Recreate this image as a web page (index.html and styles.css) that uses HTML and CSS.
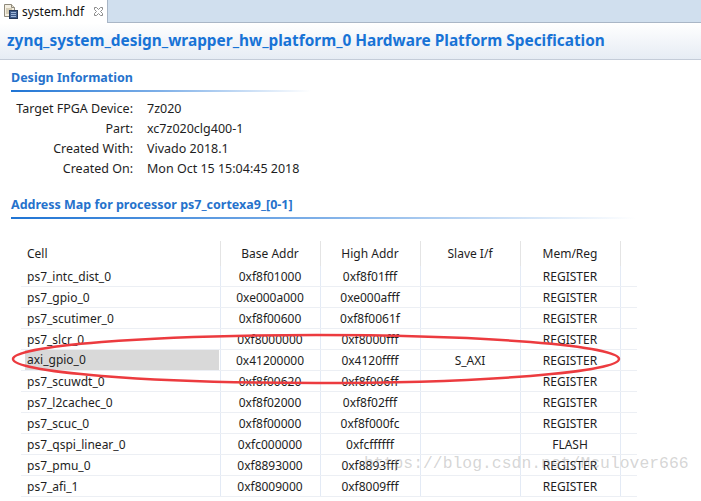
FILE: index.html
```html
<!DOCTYPE html>
<html>
<head>
<meta charset="utf-8">
<link rel="stylesheet" href="styles.css">
</head>
<body>
<div class="tabbar">
  <div class="tab">
    <svg class="file-icon" width="16" height="16" viewBox="0 0 16 16">
      <path d="M1.5 1.5h7l3 3v9h-10z" fill="#f4efe2" stroke="#8f8a7c"/>
      <path d="M8.5 1.5v3h3" fill="#e6dfcc" stroke="#8f8a7c"/>
      <path d="M3 6h6M3 8h5M3 10h4" stroke="#b9ad8c"/>
      <rect x="6.5" y="7.5" width="8" height="8" fill="#3f5c8a" stroke="#26395a"/>
      <path d="M8 9.5h5M8 11.5h5M8 13.5h5" stroke="#9fb6d8"/>
    </svg>
    <span class="tab-label">system.hdf</span>
    <svg class="close-icon" width="9" height="9" viewBox="0 0 9 9">
      <path d="M0.5 0.5h2l2 2 2-2h2v2l-2 2 2 2v2h-2l-2-2-2 2h-2v-2l2-2-2-2z" fill="#fff" stroke="#8a8a8a" stroke-width="1"/>
    </svg>
  </div>
</div>
<div class="header">
  <h1 class="title">zynq_system_design_wrapper_hw_platform_0 Hardware Platform Specification</h1>
</div>
<div class="content">
  <section class="section">
    <h2 class="section-title">Design Information</h2>
    <div class="rule rule-short"></div>
    <div class="info">
      <span class="label">Target FPGA Device:</span><span class="value">7z020</span>
      <span class="label">Part:</span><span class="value">xc7z020clg400-1</span>
      <span class="label">Created With:</span><span class="value">Vivado 2018.1</span>
      <span class="label">Created On:</span><span class="value">Mon Oct 15 15:04:45 2018</span>
    </div>
  </section>
  <section class="section section-map">
    <h2 class="section-title">Address Map for processor ps7_cortexa9_[0-1]</h2>
    <div class="rule rule-long"></div>
    <table class="map">
      <colgroup>
        <col class="c-cell"><col class="c-addr"><col class="c-addr"><col class="c-addr"><col class="c-addr"><col class="c-fill">
      </colgroup>
      <thead>
        <tr><th class="left">Cell</th><th>Base Addr</th><th>High Addr</th><th>Slave I/f</th><th>Mem/Reg</th><th class="fill"></th></tr>
      </thead>
      <tbody>
        <tr><td class="left">ps7_intc_dist_0</td><td>0xf8f01000</td><td>0xf8f01fff</td><td></td><td>REGISTER</td><td class="fill"></td></tr>
        <tr><td class="left">ps7_gpio_0</td><td>0xe000a000</td><td>0xe000afff</td><td></td><td>REGISTER</td><td class="fill"></td></tr>
        <tr><td class="left">ps7_scutimer_0</td><td>0xf8f00600</td><td>0xf8f0061f</td><td></td><td>REGISTER</td><td class="fill"></td></tr>
        <tr><td class="left">ps7_slcr_0</td><td>0xf8000000</td><td>0xf8000fff</td><td></td><td>REGISTER</td><td class="fill"></td></tr>
        <tr><td class="left"><span class="selected">axi_gpio_0</span></td><td>0x41200000</td><td>0x4120ffff</td><td>S_AXI</td><td>REGISTER</td><td class="fill"></td></tr>
        <tr><td class="left">ps7_scuwdt_0</td><td>0xf8f00620</td><td>0xf8f006ff</td><td></td><td>REGISTER</td><td class="fill"></td></tr>
        <tr><td class="left">ps7_l2cachec_0</td><td>0xf8f02000</td><td>0xf8f02fff</td><td></td><td>REGISTER</td><td class="fill"></td></tr>
        <tr><td class="left">ps7_scuc_0</td><td>0xf8f00000</td><td>0xf8f000fc</td><td></td><td>REGISTER</td><td class="fill"></td></tr>
        <tr><td class="left">ps7_qspi_linear_0</td><td>0xfc000000</td><td>0xfcffffff</td><td></td><td>FLASH</td><td class="fill"></td></tr>
        <tr><td class="left">ps7_pmu_0</td><td>0xf8893000</td><td>0xf8893fff</td><td></td><td>REGISTER</td><td class="fill"></td></tr>
        <tr><td class="left">ps7_afi_1</td><td>0xf8009000</td><td>0xf8009fff</td><td></td><td>REGISTER</td><td class="fill"></td></tr>
      </tbody>
    </table>
  </section>
</div>
<svg class="annotation" width="701" height="501" viewBox="0 0 701 501">
  <ellipse cx="316" cy="359" rx="303" ry="24" fill="none" stroke="#ec3b3f" stroke-width="2.5"/>
</svg>
<div class="watermark">https://blog.csdn.net/Mculover666</div>
</body>
</html>
```
FILE: styles.css
```css
html, body {
  margin: 0;
  padding: 0;
  background: #fff;
}
body {
  width: 701px;
  height: 501px;
  overflow: hidden;
  position: relative;
  font-family: "Noto Sans", "Open Sans", sans-serif;
  font-size: 12px;
  color: #1e1e1e;
}
.tabbar {
  height: 22px;
  background: #d0dfee;
  border-bottom: 1px solid #a9b6c6;
  display: flex;
  align-items: flex-end;
}
.tab {
  width: 108px;
  height: 23px;
  margin-bottom: -1px;
  background: #fff;
  border-right: 1px solid #a9b6c6;
  display: flex;
  align-items: center;
  box-sizing: border-box;
  padding-left: 3px;
}
.file-icon {
  flex: none;
  margin-top: -1px;
}
.tab-label {
  margin-left: 3px;
  font-size: 12px;
  color: #111;
  line-height: 16px;
}
.close-icon {
  margin-left: 10px;
  flex: none;
}
.header {
  height: 36px;
  background: linear-gradient(#ffffff, #e6ecf4);
  border-bottom: 1px solid #c4ccd8;
  display: flex;
  align-items: center;
  padding-left: 7px;
}
.title {
  margin: 0;
  font-size: 15.4px;
  font-weight: bold;
  color: #1873d6;
  white-space: nowrap;
  line-height: 18px;
}
.content {
  padding-left: 11px;
}
.section {
  padding-top: 10px;
}
.section-title {
  margin: 0;
  font-size: 12.5px;
  font-weight: bold;
  color: #2672cc;
  line-height: 16px;
}
.rule {
  height: 2px;
  margin-top: 4px;
  background: linear-gradient(90deg, #1f74d4 0%, #7fb0e8 50%, rgba(255,255,255,0) 100%);
}
.rule-short { width: 300px; }
.rule-long { width: 625px; }
.info {
  display: grid;
  grid-template-columns: 122px auto;
  column-gap: 14px;
  grid-auto-rows: 20px;
  align-items: center;
  margin-top: 6px;
  font-size: 12.5px;
}
.label {
  text-align: right;
}
.section-map {
  padding-top: 19px;
}
.map {
  margin-top: 22px;
  margin-left: 10px;
  border-collapse: collapse;
  table-layout: fixed;
  width: 616px;
}
.c-cell { width: 199px; }
.c-addr { width: 100px; }
.c-fill { width: 17px; }
.map th {
  font-weight: normal;
  height: 25px;
  padding: 0;
  text-align: center;
  border-right: 1px solid #e4e4e4;
  vertical-align: middle;
}
.map td {
  height: 20px;
  padding: 0;
  text-align: center;
  border-bottom: 1px solid #eceff4;
  border-right: 1px solid #e3eaf5;
  white-space: nowrap;
  vertical-align: middle;
}
.map .left {
  text-align: left;
  padding-left: 6px;
}
.map .fill {
  border-right: none;
}
.selected {
  display: block;
  background: #d9d9d9;
  line-height: 20px;
  margin-left: -2px;
  padding-left: 2px;
  margin-right: 1px;
}
.annotation {
  position: absolute;
  left: 0;
  top: 0;
  pointer-events: none;
}
.watermark {
  position: absolute;
  left: 364px;
  top: 454px;
  font-family: "Liberation Mono", monospace;
  font-size: 16.4px;
  color: rgba(150,150,150,0.4);
  white-space: nowrap;
  pointer-events: none;
}
```
